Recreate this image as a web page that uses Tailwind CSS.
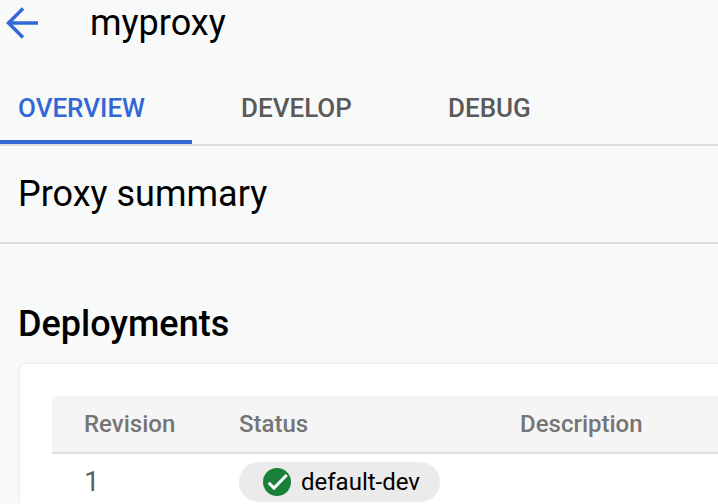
<!DOCTYPE html>
<html lang="en">
<head>
  <meta charset="UTF-8" />
  <title>myproxy</title>
  <script src="https://cdn.jsdelivr.net/npm/@tailwindcss/browser@4"></script>
</head>
<body class="bg-[#f8f9f9] h-[504px] w-[718px] overflow-hidden font-['Roboto',sans-serif]">
  <!-- header -->
  <div class="flex items-center h-[46px]">
    <svg class="w-[34px] h-[34px] ml-[5px] text-[#3367d6]" viewBox="0 0 34 34" fill="none" stroke="currentColor" stroke-width="3.5">
      <path d="M33 17H3.5M18 2.5L3.5 17L18 31.5" />
    </svg>
    <div class="ml-[51px] text-[36px] leading-[46px] text-black mt-[-1px]">myproxy</div>
  </div>

  <!-- tabs -->
  <div class="flex h-[100px] border-b-2 border-[#dadce0] text-[26px] font-medium">
    <div class="w-[192px] h-[98px] pl-[18px] pt-[44px] leading-[36px] text-[#3367d6] border-b-4 border-[#3367d6]">OVERVIEW</div>
    <div class="w-[256px] pl-[49px] pt-[44px] leading-[36px] text-[#5a5a5a]">DEVELOP</div>
    <div class="pt-[44px] leading-[36px] text-[#5a5a5a]">DEBUG</div>
  </div>

  <!-- summary -->
  <div class="h-[98px] border-b-2 border-[#dadce0] pl-[18px] pt-[24px] text-[36px] leading-[48px] text-black">Proxy summary</div>

  <!-- deployments -->
  <h2 class="pl-[18px] pt-[56px] text-[36px] leading-[48px] font-medium text-black">Deployments</h2>
  <div class="ml-[20px] mt-[16px] w-[720px] bg-white rounded-tl-[6px] shadow-[0_0_3px_rgba(0,0,0,0.12)] pt-[32px] pl-[32px] h-[140px]">
    <div class="grid grid-cols-[155px_281px_1fr] h-[58px] pl-[32px] items-center bg-[#f5f5f5] border-b-2 border-[#e0e0e0] text-[24px] font-medium text-[#757575]">
      <div>Revision</div>
      <div>Status</div>
      <div>Description</div>
    </div>
    <div class="grid grid-cols-[155px_1fr] pl-[32px] pt-[8px] items-center">
      <div class="text-[28px] leading-[40px] text-[#616161]">1</div>
      <div class="flex items-center w-[201px] h-[40px] rounded-full bg-[#ebebeb] pl-[24px]">
        <svg class="w-7 h-7" viewBox="0 0 28 28">
          <circle cx="14" cy="14" r="14" fill="#188038" />
          <path d="M5.7 14.7L11 20L23.7 7" fill="none" stroke="#fff" stroke-width="3" />
        </svg>
        <span class="ml-[10px] text-[24px] leading-[40px] text-black">default-dev</span>
      </div>
    </div>
  </div>
</body>
</html>
